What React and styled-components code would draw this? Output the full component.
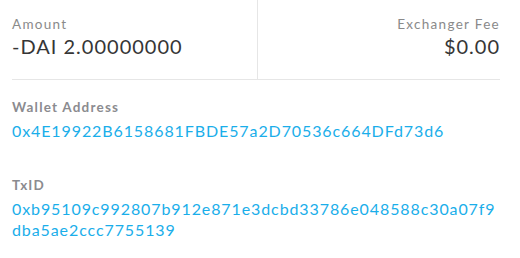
import React from 'react';
import styled, { createGlobalStyle } from 'styled-components';

const GlobalStyle = createGlobalStyle`
  html, body {
    margin: 0;
    padding: 0;
    background: #ffffff;
  }
  body {
    font-family: 'Lato', 'Noto Sans', sans-serif;
    -webkit-font-smoothing: antialiased;
  }
`;

const details = {
  amount: '-DAI 2.00000000',
  fee: '$0.00',
  wallet: '0x4E19922B6158681FBDE57a2D70536c664DFd73d6',
  txid: '0xb95109c992807b912e871e3dcbd33786e048588c30a07f9dba5ae2ccc7755139',
};

function App() {
  return (
    <Page>
      <GlobalStyle />
      <Summary>
        <Cell>
          <Label>Amount</Label>
          <Value>{details.amount}</Value>
        </Cell>
        <Cell align="right">
          <Label>Exchanger Fee</Label>
          <Value>{details.fee}</Value>
        </Cell>
      </Summary>

      <Field>
        <FieldLabel>Wallet Address</FieldLabel>
        <Hash>{details.wallet}</Hash>
      </Field>

      <Field>
        <FieldLabel>TxID</FieldLabel>
        <Hash>{details.txid}</Hash>
      </Field>
    </Page>
  );
}

const Page = styled.div`
  width: 520px;
  height: 258px;
  box-sizing: border-box;
  padding: 0 20px 0 12px;
  background: #ffffff;
  overflow: hidden;
`;

const Summary = styled.div`
  display: grid;
  grid-template-columns: 245px 1fr;
  height: 79px;
  border-bottom: 1px solid #e6e6e6;
  margin-bottom: 19px;
`;

const Cell = styled.div`
  display: flex;
  flex-direction: column;
  align-items: ${(p) => (p.align === 'right' ? 'flex-end' : 'flex-start')};
  padding-top: 16px;
  border-left: ${(p) => (p.align === 'right' ? '1px solid #e6e6e6' : 'none')};
`;

const Label = styled.div`
  font-size: 13.5px;
  line-height: 16px;
  color: #8a8a8a;
  letter-spacing: 1.3px;
`;

const Value = styled.div`
  margin-top: 3px;
  font-size: 20px;
  line-height: 22px;
  color: #363636;
  letter-spacing: 1px;
`;

const Field = styled.div`
  margin-bottom: 36px;
`;

const FieldLabel = styled.div`
  font-size: 13.5px;
  line-height: 16px;
  font-weight: 700;
  color: #8b8b8f;
  letter-spacing: 1.2px;
`;

const Hash = styled.div`
  margin-top: 5px;
  width: 493px;
  font-size: 16px;
  line-height: 21px;
  color: #1aaeea;
  word-break: break-all;
  letter-spacing: 0.9px;
`;

export default App;
